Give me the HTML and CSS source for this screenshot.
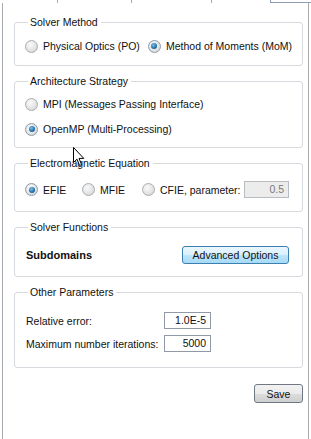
FILE: index.html
```html
<!DOCTYPE html>
<html lang="en">

<head>
    <meta charset="UTF-8">
    <meta name="viewport" content="width=device-width, initial-scale=1.0">
    <title>Solver Settings</title>
    <link rel="stylesheet" href="styles.css">
</head>

<body>
    <div class="tabs">
        <div class="tab t1"></div>
        <div class="tab t2"></div>
        <div class="tab t3"></div>
        <div class="tab t4"></div>
        <div class="tab active"></div>
    </div>
    <div class="panel">
        <fieldset class="group g1">
            <legend>Solver Method</legend>
            <div class="row">
                <label class="opt w1"><span class="radio"></span>Physical Optics (PO)</label>
                <label class="opt"><span class="radio on"></span>Method of Moments (MoM)</label>
            </div>
        </fieldset>

        <fieldset class="group g2">
            <legend>Architecture Strategy</legend>
            <label class="opt"><span class="radio"></span>MPI (Messages Passing Interface)</label>
            <label class="opt"><span class="radio on"></span>OpenMP (Multi-Processing)</label>
        </fieldset>

        <fieldset class="group g3">
            <legend>Electromagnetic Equation</legend>
            <div class="row">
                <label class="opt w2"><span class="radio on"></span>EFIE</label>
                <label class="opt w3"><span class="radio"></span>MFIE</label>
                <label class="opt cfie"><span class="radio"></span>CFIE, parameter:</label>
                <div class="field disabled">0.5</div>
            </div>
        </fieldset>

        <fieldset class="group g4">
            <legend>Solver Functions</legend>
            <div class="row spread">
                <b>Subdomains</b>
                <button class="btn adv">Advanced Options</button>
            </div>
        </fieldset>

        <fieldset class="group g5">
            <legend>Other Parameters</legend>
            <div class="param">
                <span class="plabel">Relative error:</span>
                <div class="field">1.0E-5</div>
            </div>
            <div class="param">
                <span class="plabel">Maximum number iterations:</span>
                <div class="field">5000</div>
            </div>
        </fieldset>

        <div class="actions">
            <button class="btn save">Save</button>
        </div>

        <svg class="cursor" width="12" height="20" viewBox="0 0 12 20">
            <path d="M0.5 0.5 L0.5 15.5 L4 12.2 L6.6 18.5 L8.6 17.6 L6 11.4 L10.8 11.4 Z" fill="#fff" stroke="#000" stroke-width="1"/>
        </svg>
    </div>
</body>

</html>
```

FILE: styles.css
```css
body {
    margin: 0;
    background-color: #fff;
    font-family: "Liberation Sans", Arial, sans-serif;
    font-size: 10.5px;
    color: #111;
    width: 311px;
    height: 439px;
    overflow: hidden;
}

.tabs {
    display: flex;
    height: 3px;
}
.tab {
    border-right: 1px solid #a7abb0;
}
.t1 { width: 2px; border-right: none; }
.t2 { width: 55px; }
.t3 { width: 73px; }
.t4 { width: 79px; }
.active {
    width: 58px;
    border-right: none;
}
.tabs::after {
    content: "";
    flex: 1;
    border-left: 1px solid #8d9bb5;
    border-bottom: 1px solid #8d9bb5;
}

.panel {
    position: relative;
    margin-left: 2px;
    width: 307px;
    height: 436px;
    border-left: 1px solid #a7abb0;
    border-right: 1px solid #a7abb0;
    box-sizing: border-box;
    padding: 13px 5px 0 11px;
}

.group {
    margin: 0 0 9px;
    padding: 0 10px;
    border: 1px solid #d6dade;
    border-radius: 3px;
    display: flex;
    flex-direction: column;
    min-width: 0;
}
legend {
    margin-left: 3px;
    padding: 0 3px 0 2px;
    line-height: 13px;
}
.g1 { padding-top: 9px; padding-bottom: 11px; }
.g2 { padding-top: 8px; padding-bottom: 10px; gap: 9px; }
.g3 { padding-top: 11px; padding-bottom: 13px; }
.g4 { padding-top: 12px; padding-bottom: 12px; }
.g5 { padding-top: 13px; padding-bottom: 15px; gap: 6px; }

.row {
    display: flex;
    align-items: center;
}
.spread {
    justify-content: space-between;
    padding-left: 1px;
    padding-right: 3px;
}

.opt {
    display: flex;
    align-items: center;
    height: 16px;
    white-space: nowrap;
}
.w1 { width: 126px; }
.w2 { width: 57px; }
.w3 { width: 60px; }
.cfie { width: 102px; }

.radio {
    width: 11px;
    height: 11px;
    border-radius: 50%;
    border: 1px solid #a9aeb3;
    background: radial-gradient(circle at 40% 35%, #fafafa 0%, #e4e4e4 55%, #cbced1 100%);
    margin-right: 5px;
    box-sizing: content-box;
    position: relative;
    flex-shrink: 0;
}
.radio.on {
    border-color: #8a9aab;
}
.radio.on::after {
    content: "";
    position: absolute;
    left: 2.5px;
    top: 2.5px;
    width: 6px;
    height: 6px;
    border-radius: 50%;
    background: radial-gradient(circle at 40% 35%, #7cc0ea 0%, #1e6fa8 60%, #0d4b7c 100%);
}

.field {
    height: 17px;
    box-sizing: border-box;
    border: 1px solid #8f9aa6;
    background: #fff;
    text-align: right;
    padding: 0 4px;
    line-height: 15px;
    flex-shrink: 0;
}
.disabled {
    width: 45px;
    background: #ececec;
    border-color: #b7bcc1;
    color: #7a7a7a;
}

.param {
    display: flex;
    align-items: center;
    padding-left: 1px;
}
.plabel {
    width: 138px;
    white-space: nowrap;
}
.param .field {
    width: 47px;
}

b {
    font-size: 11px;
}

.btn {
    font-family: inherit;
    font-size: 10.5px;
    height: 18px;
    padding: 0;
    border: 1px solid #707983;
    border-radius: 3px;
    color: #111;
}
.adv {
    width: 107px;
    background: linear-gradient(#eaf6fd 0%, #d9f0fc 50%, #bee6fd 51%, #a7d9f5 100%);
    border-color: #3c7fb1;
}
.save {
    width: 49px;
    height: 19px;
    background: linear-gradient(#f2f2f2 0%, #ebebeb 50%, #dddddd 51%, #cfcfcf 100%);
}
.actions {
    display: flex;
    justify-content: flex-end;
    padding-top: 7px;
    padding-right: 0;
}

.cursor {
    position: absolute;
    left: 70px;
    top: 144px;
}
```
